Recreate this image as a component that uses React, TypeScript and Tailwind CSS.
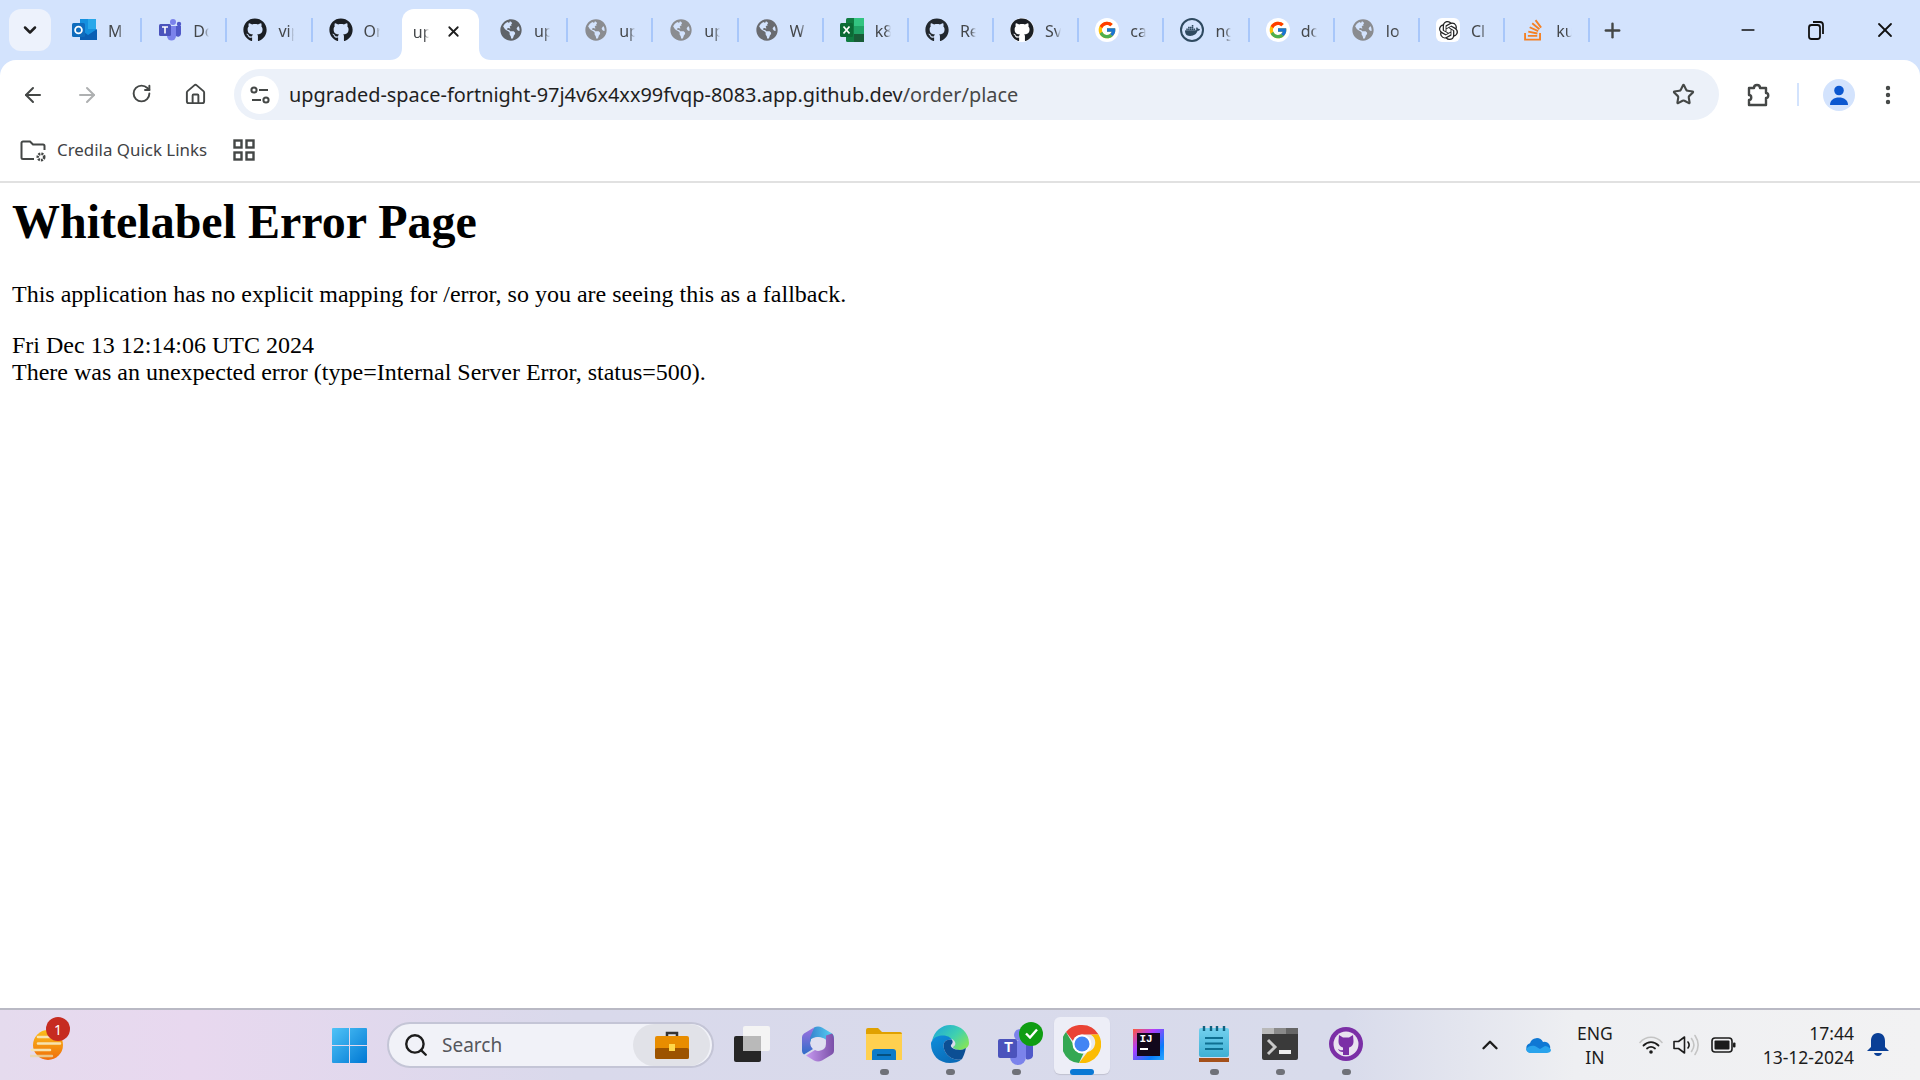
import type { ReactNode } from "react";
import { ArrowLeft, ArrowRight, ChevronDown, ChevronUp, EllipsisVertical, House, Minus, Plus, RotateCw, Search, Star, X } from "lucide-react";
import { FaGithub, FaGlobeAmericas, FaStackOverflow } from "react-icons/fa";
import { FcGoogle } from "react-icons/fc";
import { SiDocker, SiOpenai } from "react-icons/si";

const sans = "font-['Noto_Sans','Open_Sans',sans-serif]";

function Outlook() {
  return (
    <svg width="26" height="26" viewBox="0 0 26 26">
      <rect x="8" y="2" width="16" height="20" fill="#1490df" />
      <rect x="16" y="2" width="8" height="10" fill="#28a8ea" />
      <path d="M8 12l8 6 9-6v11H8z" fill="#0a5fb4" />
      <rect x="0" y="6" width="13" height="14" rx="1.5" fill="#0f6cbd" />
      <circle cx="6.5" cy="13" r="3.4" fill="none" stroke="#fff" strokeWidth="1.8" />
    </svg>
  );
}

function TeamsSmall() {
  return (
    <svg width="24" height="24" viewBox="0 0 24 24">
      <circle cx="15" cy="4" r="3" fill="#7b83eb" />
      <circle cx="21" cy="6" r="2.2" fill="#5059c9" />
      <path d="M9 8h9v10a4.500 4.500 0 0 1-9 0z" fill="#7b83eb" />
      <path d="M18 8h5v8a3 3 0 0 1-5 2z" fill="#5059c9" />
      <rect x="1" y="6" width="12" height="12" rx="1.500" fill="#4b53bc" />
      <path d="M4 9h6M7 9v6.500" stroke="#fff" strokeWidth="1.600" />
    </svg>
  );
}

function Excel() {
  return (
    <svg width="26" height="26" viewBox="0 0 26 26">
      <rect x="7" y="1" width="18" height="24" rx="1.500" fill="#107c41" />
      <rect x="15" y="1" width="10" height="8" fill="#33c481" />
      <rect x="15" y="9" width="10" height="8" fill="#21a366" />
      <rect x="15" y="17" width="10" height="8" fill="#185c37" />
      <rect x="1" y="6" width="13" height="14" rx="1.500" fill="#0b6a35" />
      <path d="M4.500 9.500l6 7M10.500 9.500l-6 7" stroke="#fff" strokeWidth="1.800" />
    </svg>
  );
}

type TabItem = { title: string; icon: ReactNode };

const tabs: TabItem[] = [
  { title: "Mi", icon: <Outlook /> },
  { title: "Do", icon: <TeamsSmall /> },
  { title: "vip", icon: <FaGithub size={24} color="#1b1f24" /> },
  { title: "Or", icon: <FaGithub size={24} color="#1b1f24" /> },
  { title: "up", icon: null },
  { title: "up", icon: <FaGlobeAmericas size={22} color="#5f6368" /> },
  { title: "up", icon: <FaGlobeAmericas size={22} color="#8a8c90" /> },
  { title: "up", icon: <FaGlobeAmericas size={22} color="#8a8c90" /> },
  { title: "W", icon: <FaGlobeAmericas size={22} color="#696b70" /> },
  { title: "k8", icon: <Excel /> },
  { title: "Re", icon: <FaGithub size={24} color="#22282e" /> },
  { title: "Sv", icon: <span className="flex h-[24px] w-[24px] items-center justify-center rounded-full bg-white"><FaGithub size={24} color="#1b1f24" /></span> },
  { title: "ca", icon: <span className="flex h-[24px] w-[24px] items-center justify-center rounded-full bg-white"><FcGoogle size={20} /></span> },
  { title: "ng", icon: <span className="flex h-[24px] w-[24px] items-center justify-center rounded-full border-2 border-[#2f4a60] bg-[#d3e3fd]"><SiDocker size={15} color="#2f4a60" /></span> },
  { title: "do", icon: <span className="flex h-[24px] w-[24px] items-center justify-center rounded-full bg-white"><FcGoogle size={20} /></span> },
  { title: "lo", icon: <FaGlobeAmericas size={22} color="#8a8c90" /> },
  { title: "Cl", icon: <span className="flex h-[24px] w-[24px] items-center justify-center rounded-md bg-white"><SiOpenai size={19} color="#222" /></span> },
  { title: "ku", icon: <FaStackOverflow size={24} color="#f48024" /> },
];

function Tab({ tab, index }: { tab: TabItem; index: number }) {
  if (index === 4) {
    return (
      <div className="relative flex h-[51px] w-[85.2px] shrink-0 self-end">
        <div className="mx-[4px] flex flex-1 items-start rounded-t-[12px] bg-white pl-[11px] pt-[11px]">
          <span className="w-[16px] overflow-hidden whitespace-nowrap text-[16px] leading-[24px] text-[#44474a] [mask-image:linear-gradient(to_right,black_70%,transparent)]">{tab.title}</span>
          <X size={17} strokeWidth={2.500} color="#1f1f1f" className="ml-[16px] mt-[3px]" />
        </div>
        {/* the two little curves where the active tab meets the toolbar */}
        <svg className="absolute bottom-0 left-[-8px]" width="12" height="12" viewBox="0 0 12 12"><path d="M0 12C7 12 12 8 12 0V12z" fill="#fff" /></svg>
        <svg className="absolute bottom-0 right-[-8px]" width="12" height="12" viewBox="0 0 12 12"><path d="M12 12C5 12 0 8 0 0V12z" fill="#fff" /></svg>
      </div>
    );
  }
  return (
    <div className="flex h-[60px] w-[85.2px] shrink-0 items-center">
      <span className="ml-[15px] flex w-[26px] shrink-0 items-center justify-center">{tab.icon}</span>
      <span className="ml-[10px] mt-[2px] w-[16px] overflow-hidden whitespace-nowrap text-[16px] text-[#44474a] [mask-image:linear-gradient(to_right,black_65%,transparent)]">{tab.title}</span>
      <span className={index === 3 ? "ml-auto" : "ml-auto h-[24px] w-[2px] bg-[#a8c7fa]"} />
    </div>
  );
}

function TabStrip() {
  return (
    <div className="flex h-[60px] shrink-0 items-center bg-[#d3e3fd]">
      <div className="ml-[9px] mr-[6px] flex h-[42px] w-[42px] shrink-0 items-center justify-center rounded-[12px] bg-[#edf2fc]">
        <ChevronDown size={20} strokeWidth={3} color="#1f1f1f" />
      </div>
      {tabs.map((t, i) => (
        <Tab key={i} tab={t} index={i} />
      ))}
      <Plus size={23} strokeWidth={2.500} color="#444746" className="ml-[11px]" />
      <div className="ml-auto flex items-center">
        <span className="flex w-[68px] justify-center"><Minus size={20} strokeWidth={2} color="#111" /></span>
        <span className="flex w-[68px] justify-center">
          <svg width="18" height="20" viewBox="0 0 18 20" fill="none" stroke="#111" strokeWidth="1.800"><rect x="2" y="5" width="11" height="14" rx="2.500" /><path d="M6 2h7a3 3 0 0 1 3 3v9" /></svg>
        </span>
        <span className="flex w-[70px] justify-center"><X size={24} strokeWidth={1.800} color="#111" /></span>
      </div>
    </div>
  );
}

function ToolbarBtn({ children }: { children: ReactNode }) {
  return <span className="flex w-[54px] shrink-0 justify-center">{children}</span>;
}

function Toolbar() {
  return (
    <div className="flex h-[69px] shrink-0 items-center rounded-t-[16px] bg-white pr-[20px]">
      <div className="ml-[6px] flex">
        <ToolbarBtn><ArrowLeft size={24} strokeWidth={2} color="#444746" /></ToolbarBtn>
        <ToolbarBtn><ArrowRight size={24} strokeWidth={2} color="#aeb0b1" /></ToolbarBtn>
        <ToolbarBtn><RotateCw size={21} strokeWidth={2.200} color="#444746" /></ToolbarBtn>
        <ToolbarBtn><House size={23} strokeWidth={2} color="#444746" /></ToolbarBtn>
      </div>
      <div className="ml-[12px] flex h-[51px] flex-1 items-center rounded-full bg-[#ecf1f9] pl-[7px] pr-[24px]">
        <span className="flex h-[38px] w-[38px] items-center justify-center rounded-full bg-white">
          <svg width="22" height="20" viewBox="0 0 22 20" fill="none" stroke="#444746" strokeWidth="2"><circle cx="5" cy="5" r="2.600" /><path d="M10 5h9M3 15h9" /><circle cx="17" cy="15" r="2.600" /></svg>
        </span>
        <span className="ml-[10px] text-[19.900px] text-[#1f1f1f]">
          upgraded-space-fortnight-97j4v6x4xx99fvqp-8083.app.github.dev<span className="text-[#474747]">/order/place</span>
        </span>
        <Star size={23} strokeWidth={2.200} color="#444746" className="ml-auto" />
      </div>
      <span className="ml-[25px] flex w-[28px] justify-center">
        <svg width="26" height="26" viewBox="0 0 26 26" fill="none" stroke="#444746" strokeWidth="2.400" strokeLinejoin="round"><path d="M4 6h5c0-4 6-4 6 0h6v5c3 0 3 5 0 5v7H4v-5c3 0 3-5 0-5z" /></svg>
      </span>
      <span className="ml-[25px] h-[23px] w-[2px] bg-[#d3e3fd]" />
      <span className="ml-[24px] flex h-[32px] w-[32px] items-center justify-center rounded-full bg-[#d3e3fd]">
        <svg width="22" height="22" viewBox="0 0 22 22" fill="#0b57d0"><circle cx="11" cy="6.500" r="4.800" /><path d="M2 21c0-5 4-7.500 9-7.500s9 2.500 9 7.500z" /></svg>
      </span>
      <EllipsisVertical size={24} strokeWidth={2.400} color="#444746" className="ml-[21px]" />
    </div>
  );
}

function Bookmarks() {
  return (
    <div className={`flex h-[54px] shrink-0 items-start border-b-2 border-[#e1e1e1] bg-white pt-[7px] ${sans}`}>
      <svg className="ml-[20px] mt-[3px]" width="28" height="24" viewBox="0 0 28 24" fill="none" stroke="#444746" strokeWidth="2">
        <path d="M14 20H3a1.500 1.500 0 0 1-1.500-1.500V4A1.500 1.500 0 0 1 3 2.500h7l3 3h10A1.500 1.500 0 0 1 24.500 7v4" />
        <circle cx="21" cy="18" r="3.200" strokeWidth="2.600" strokeDasharray="2 1" />
      </svg>
      <span className="ml-[9px] text-[16.900px] leading-[27px] text-[#3f4245]">Credila Quick Links</span>
      <svg className="ml-[26px] mt-[3px]" width="22" height="22" viewBox="0 0 22 22" fill="none" stroke="#444746" strokeWidth="2.400"><rect x="1.500" y="1.500" width="7" height="7" /><rect x="13.500" y="1.500" width="7" height="7" /><rect x="1.500" y="13.500" width="7" height="7" /><rect x="13.500" y="13.500" width="7" height="7" /></svg>
    </div>
  );
}

function Page() {
  return (
    <main className="min-h-0 flex-1 bg-white pl-[12px] font-['Liberation_Serif',serif] text-black">
      <h1 className="mt-[12px] text-[48px] font-bold leading-[54px]">Whitelabel Error Page</h1>
      <p className="mt-[32px] text-[24px] leading-[27px]">This application has no explicit mapping for /error, so you are seeing this as a fallback.</p>
      <div className="mt-[24px] text-[24px] leading-[27px]">Fri Dec 13 12:14:06 UTC 2024</div>
      <div className="text-[24px] leading-[27px]">There was an unexpected error (type=Internal Server Error, status=500).</div>
    </main>
  );
}

function WindowsLogo() {
  return (
    <svg width="35" height="35" viewBox="0 0 35 35">
      <defs>
        <linearGradient id="win" x1="0" y1="0" x2="1" y2="1"><stop offset="0" stopColor="#4fc3f7" /><stop offset="1" stopColor="#0078d4" /></linearGradient>
      </defs>
      <path d="M0 1a1 1 0 0 1 1-1h16v17H0zM18 0h16a1 1 0 0 1 1 1v16H18zM0 18h17v17H1a1 1 0 0 1-1-1zM18 18h17v16a1 1 0 0 1-1 1H18z" fill="url(#win)" />
    </svg>
  );
}

function TaskView() {
  return (
    <svg width="36" height="36" viewBox="0 0 36 36">
      <rect x="0" y="10" width="27" height="26" rx="2" fill="#262626" />
      <rect x="9" y="0" width="27" height="25" rx="2" fill="#f4f4f4" />
      <rect x="9" y="10" width="18" height="15" fill="#b9b9b9" />
    </svg>
  );
}

function Copilot() {
  return (
    <svg width="32" height="36" viewBox="0 0 32 36">
      <defs>
        <linearGradient id="copL" x1="0" y1="0" x2="0" y2="1"><stop offset="0" stopColor="#a06fe0" /><stop offset="1" stopColor="#2f6ec9" /></linearGradient>
        <linearGradient id="copT" x1="0" y1="0" x2="1" y2="0"><stop offset="0" stopColor="#2f6fc4" /><stop offset="1" stopColor="#56d6f5" /></linearGradient>
        <linearGradient id="copB" x1="0" y1="0" x2="1" y2="0"><stop offset="0" stopColor="#c79af0" /><stop offset="1" stopColor="#7a4fa8" /></linearGradient>
      </defs>
      <path d="M12 1.500Q16-.500 20 1.500L30 7.500Q32 9 32 11V18L21 12Q16 10 11 12Q8 14 8 17L2 21z" fill="url(#copT)" />
      <path d="M12 1.500L2 7.500Q0 9 0 11V25Q0 27 2 28.500L11 23Q8 20 8 17V12z" fill="url(#copL)" />
      <path d="M32 14V25Q32 27 30 28.500L20 34.500Q16 36.500 12 34.500L4 29.500L13 24Q18 26 22 23Q24 21 24 18V9.500L30 7.500Q32 9 32 14z" fill="url(#copB)" />
      <path d="M16 11l7 2v6c0 3-3 5-7 6-4-1-7-3-7-6v-6z" fill="#dfe0f0" />
    </svg>
  );
}

function FolderIcon() {
  return (
    <svg width="36" height="32" viewBox="0 0 36 32">
      <path d="M0 2a2 2 0 0 1 2-2h10l4 4h18a2 2 0 0 1 2 2v6H0z" fill="#e0a100" />
      <path d="M0 6h36v26H0z" fill="#ffd04f" />
      <path d="M6 32v-8a3 3 0 0 1 3-3h18a3 3 0 0 1 3 3v8z" fill="#0c7bc9" />
      <rect x="11" y="26" width="14" height="2" fill="#04507f" />
    </svg>
  );
}

function EdgeIcon() {
  return (
    <svg width="38" height="38" viewBox="0 0 38 38">
      <defs>
        <linearGradient id="edgeA" x1="0" y1="0" x2="1" y2="0.700"><stop offset="0" stopColor="#1aa3de" /><stop offset="0.600" stopColor="#3fd0b0" /><stop offset="1" stopColor="#7fe35f" /></linearGradient>
        <linearGradient id="edgeB" x1="0" y1="0" x2="0.600" y2="1"><stop offset="0" stopColor="#0f8fdc" /><stop offset="1" stopColor="#0a6bb8" /></linearGradient>
      </defs>
      <path d="M1 16C3 6 11 0 19 0c11 0 19 8 19 18 0 4-4 7-9 7-4 0-7-2-7-3 2-1 3-3 2-5-2-4-9-6-15-5-4 1-7 2-8 4z" fill="url(#edgeA)" />
      <path d="M1 16C5 9 18 9 21 15c-3-1-7 0-8 3-2 6 3 14 10 16 3 1 6 1 8 0-3 3-8 4-12 4C8 38 0 30 0 19c0-1 0-2 1-3z" fill="url(#edgeB)" />
      <path d="M13 18c1-3 5-4 8-3 1 1 1 3-1 5-1 2 3 5 9 5 2 0 4-1 6-2-1 5-3 9-4 11-2 1-5 1-8 0-7-2-12-10-10-16z" fill="#0c4f94" />
    </svg>
  );
}

function TeamsBig() {
  return (
    <div className="relative h-[36px] w-[36px]">
      <svg width="36" height="36" viewBox="0 0 36 36" className="mt-[5px]">
        <circle cx="22" cy="6" r="6" fill="#7b83eb" />
        <path d="M12 12h16v16a8 8 0 0 1-16 0z" fill="#7b83eb" />
        <path d="M28 10h7v17a5 5 0 0 1-7 3z" fill="#5059c9" />
        <rect x="0" y="10" width="19" height="19" rx="2" fill="#4b53bc" />
      </svg>
      <span className="absolute left-[1px] top-[9px] flex h-[19px] w-[19px] items-center justify-center font-['Liberation_Sans',sans-serif] text-[14px] font-bold text-white">T</span>
      <span className="absolute left-[21px] top-[-7px] flex h-[24px] w-[24px] items-center justify-center rounded-full bg-[#0f9d12]">
        <svg width="13" height="11" viewBox="0 0 13 11" fill="none" stroke="#fff" strokeWidth="2.400"><path d="M1 5.500l4 4 7-8" /></svg>
      </span>
    </div>
  );
}

function ChromeIcon() {
  return (
    <svg width="38" height="38" viewBox="0 0 38 38">
      <circle cx="19" cy="19" r="19" fill="#e8eaed" />
      <path d="M19 0a19 19 0 0 1 16.500 9.500H19a9.500 9.500 0 0 0-9 6.500L3 7A19 19 0 0 1 19 0z" fill="#ea4335" />
      <path d="M3 7l8.500 14.500a9.500 9.500 0 0 0 9 7L16 38A19 19 0 0 1 3 7z" fill="#34a853" />
      <path d="M35.500 9.500A19 19 0 0 1 16 38l8.500-11a9.500 9.500 0 0 0 3-17.500z" fill="#fbbc04" />
      <circle cx="19" cy="19" r="9.500" fill="#fff" />
      <circle cx="19" cy="19" r="7.500" fill="#4285f4" />
    </svg>
  );
}

function IdeaIcon() {
  return (
    <div className="flex h-[31px] w-[31px] flex-col bg-[linear-gradient(135deg,#ff5a36,#b13cff_35%,#087cfa_75%,#2aa8ff)] p-[4px]">
      <div className="flex flex-1 flex-col bg-[#12081c] px-[3px] font-['Liberation_Mono',monospace] text-[11px] font-bold leading-[13px] text-white">
        IJ
        <span className="mt-[2px] h-[2px] w-[8px] bg-white" />
      </div>
    </div>
  );
}

function NotepadIcon() {
  return (
    <svg width="30" height="36" viewBox="0 0 30 36">
      <defs>
        <linearGradient id="note" x1="0" y1="0" x2="0" y2="1"><stop offset="0" stopColor="#72d0ee" /><stop offset="1" stopColor="#3fb0d4" /></linearGradient>
      </defs>
      <rect x="0" y="32" width="30" height="4" fill="#a4501a" />
      <rect x="0" y="2" width="30" height="29" rx="2" fill="url(#note)" />
      <path d="M5 0v5M12 0v5M18 0v5M25 0v5" stroke="#10617f" strokeWidth="2.400" />
      <path d="M6 12h18M6 17.500h18M6 23h18" stroke="#0f6f91" strokeWidth="2" />
    </svg>
  );
}

function TerminalIcon() {
  return (
    <svg width="36" height="32" viewBox="0 0 36 32">
      <rect width="36" height="32" rx="2" fill="#3a3a3a" />
      <rect width="12" height="6" fill="#b9b9b9" />
      <rect x="12" width="12" height="6" fill="#8a8a8a" />
      <rect x="24" width="12" height="6" fill="#666" />
      <path d="M6 12l7 7-7 7" fill="none" stroke="#c9c9c9" strokeWidth="3" />
      <rect x="17" y="22" width="12" height="4" fill="#eee" />
    </svg>
  );
}

function GithubDesktop() {
  return (
    <svg width="34" height="34" viewBox="0 0 34 34">
      <circle cx="17" cy="17" r="17" fill="#7b2fa6" />
      <circle cx="17" cy="17" r="12.500" fill="#e9e2f0" />
      <path d="M10 8l4 2.500h6L24 8l.500 6c0 4-2 6-4.500 6.500V28h-6v-3c-3 0-4-1-5-3 1 .500 3 2 5 1v-2.500C11.500 20 9.500 18 9.500 14z" fill="#7b2fa6" />
    </svg>
  );
}

function AppCell({ children, dot, active }: { children: ReactNode; dot?: boolean; active?: boolean }) {
  return (
    <div className="relative flex h-[72px] w-[66px] shrink-0 items-center justify-center pb-[2px]">
      {active && <span className="absolute left-[5px] top-[8px] h-[57px] w-[56px] rounded-[6px] bg-[#edeef7] shadow-[0_1px_1px_#c0c1d0]" />}
      <span className="relative">{children}</span>
      {dot && <span className="absolute bottom-[6px] left-[29px] h-[6px] w-[9px] rounded-full bg-[#6f7178]" />}
      {active && <span className="absolute bottom-[6px] left-[21px] h-[6px] w-[24px] rounded-full bg-[#0a78d4]" />}
    </div>
  );
}

function Taskbar() {
  return (
    <footer className={`flex h-[72px] shrink-0 items-center border-t-2 border-[#b9b9c4] bg-[linear-gradient(90deg,#e5dbee_0%,#e8d8ef_10%,#d9d9eb_30%,#d8dbeb_70%,#eeeff2_82%,#f2f2f3_100%)] ${sans}`}>
      {/* weather widget */}
      <div className="relative ml-[30px] h-[32px] w-[33px]">
        <svg width="33" height="32" viewBox="0 0 33 32">
          <defs>
            <linearGradient id="sun" x1="0" y1="0" x2="0" y2="1"><stop offset="0" stopColor="#fbbe1a" /><stop offset="1" stopColor="#ef6c0a" /></linearGradient>
          </defs>
          <circle cx="18" cy="16" r="15" fill="url(#sun)" />
          <path d="M8 8h12M8 14.500h18M2 21h18M24 14.500h6" stroke="#f6e3b0" strokeWidth="2.600" strokeLinecap="round" />
          <path d="M0 27h22" stroke="#e9d9a8" strokeWidth="2.400" strokeLinecap="round" opacity="0.800" />
        </svg>
        <span className="absolute left-[16px] top-[-12px] flex h-[24px] w-[24px] items-center justify-center rounded-full bg-[#c62b20] text-[14px] text-white">1</span>
      </div>
      <div className="ml-[253px] flex w-[66px] justify-center"><WindowsLogo /></div>
      <div className="ml-[5px] flex h-[46px] w-[327px] items-center rounded-full border-2 border-[#c4c5d6] bg-[#f1f2f8] pl-[14px] pr-[2px]">
        <Search size={26} strokeWidth={2.200} color="#1c1c1c" />
        <span className="ml-[13px] text-[19px] text-[#55565c]">Search</span>
        <span className="ml-auto flex h-[42px] w-[77px] items-center justify-center rounded-full bg-[#e1e2e8]">
          <svg width="34" height="28" viewBox="0 0 34 28">
            <path d="M12 5V2h10v3" fill="none" stroke="#333" strokeWidth="2.500" />
            <rect y="5" width="34" height="23" rx="2" fill="#e88d00" />
            <rect y="17" width="34" height="11" rx="2" fill="#9c5300" />
            <rect x="14" y="13" width="6" height="7" fill="#ffd84a" />
          </svg>
        </span>
      </div>
      <div className="ml-[5px] flex">
        <AppCell><TaskView /></AppCell>
        <AppCell><Copilot /></AppCell>
        <AppCell dot><FolderIcon /></AppCell>
        <AppCell dot><EdgeIcon /></AppCell>
        <AppCell dot><TeamsBig /></AppCell>
        <AppCell active><ChromeIcon /></AppCell>
        <AppCell><IdeaIcon /></AppCell>
        <AppCell dot><NotepadIcon /></AppCell>
        <AppCell dot><TerminalIcon /></AppCell>
        <AppCell dot><GithubDesktop /></AppCell>
      </div>
      {/* system tray */}
      <ChevronUp size={26} strokeWidth={2.200} color="#1c1c1c" className="ml-[98px]" />
      <svg className="ml-[23px]" width="25" height="16" viewBox="0 0 25 16">
        <path d="M5 16a5 5 0 0 1-1-9.800A7 7 0 0 1 17 5a5.500 5.500 0 0 1 3 11z" fill="#0f78d4" />
        <path d="M5 16c-3 0-5-2-5-4 2-3 6-4 9-3l5 3 5-3c3 0 6 3 6 4 0 2-2 3-5 3z" fill="#29a3ec" />
      </svg>
      <div className="ml-[26px] flex flex-col items-center text-[17.500px] leading-[24px] text-[#1c1c1c]">
        <span>ENG</span>
        <span>IN</span>
      </div>
      <svg className="ml-[26px]" width="24" height="18" viewBox="0 0 24 18" fill="none" strokeLinecap="round">
        <path d="M1 6.500C7-.500 17-.500 23 6.500" stroke="#c4c4c4" strokeWidth="1.600" />
        <path d="M4.500 9.500c4.500-4.500 10.500-4.500 15 0" stroke="#1c1c1c" strokeWidth="1.800" />
        <path d="M8 12.500c2.500-2 5.500-2 8 0" stroke="#1c1c1c" strokeWidth="1.800" />
        <circle cx="12" cy="16" r="1.800" fill="#1c1c1c" />
      </svg>
      <svg className="ml-[10px]" width="26" height="24" viewBox="0 0 26 24" fill="none" strokeLinecap="round" strokeLinejoin="round">
        <path d="M1 8.500h4.500L11.500 4v16l-6-4.500H1z" stroke="#1c1c1c" strokeWidth="1.600" />
        <path d="M15 9c1.500 2 1.500 4 0 6" stroke="#1c1c1c" strokeWidth="1.600" />
        <path d="M18.500 5.500c3 4 3 9 0 13" stroke="#c4c4c4" strokeWidth="1.600" />
        <path d="M22 2.500c4 6 4 13 0 19" stroke="#c4c4c4" strokeWidth="1.600" />
      </svg>
      <svg className="ml-[12px]" width="25" height="16" viewBox="0 0 25 16">
        <rect x="1" y="1" width="20" height="14" rx="3" fill="none" stroke="#1c1c1c" strokeWidth="1.600" />
        <rect x="3.500" y="3.500" width="15" height="9" rx="1" fill="#1c1c1c" />
        <rect x="22" y="5.500" width="2.500" height="5" rx="1" fill="#1c1c1c" />
      </svg>
      <div className="ml-auto flex flex-col items-end text-[17.500px] leading-[24px] text-[#1c1c1c]">
        <span>17:44</span>
        <span>13-12-2024</span>
      </div>
      <svg className="ml-[13px] mr-[31px]" width="22" height="24" viewBox="0 0 22 24" fill="#0a3f96">
        <path d="M11 0c5 0 7 4 7 8v6l4 4H0l4-4V8c0-4 2-8 7-8z" />
        <path d="M7 20h8c-1 4-7 4-8 0z" />
      </svg>
    </footer>
  );
}

export default function App() {
  return (
    <div className="flex h-[1080px] w-[1920px] flex-col overflow-hidden bg-[#d3e3fd]">
      <div className={`flex shrink-0 flex-col ${sans}`}>
        <TabStrip />
        <Toolbar />
      </div>
      <Bookmarks />
      <Page />
      <Taskbar />
    </div>
  );
}
